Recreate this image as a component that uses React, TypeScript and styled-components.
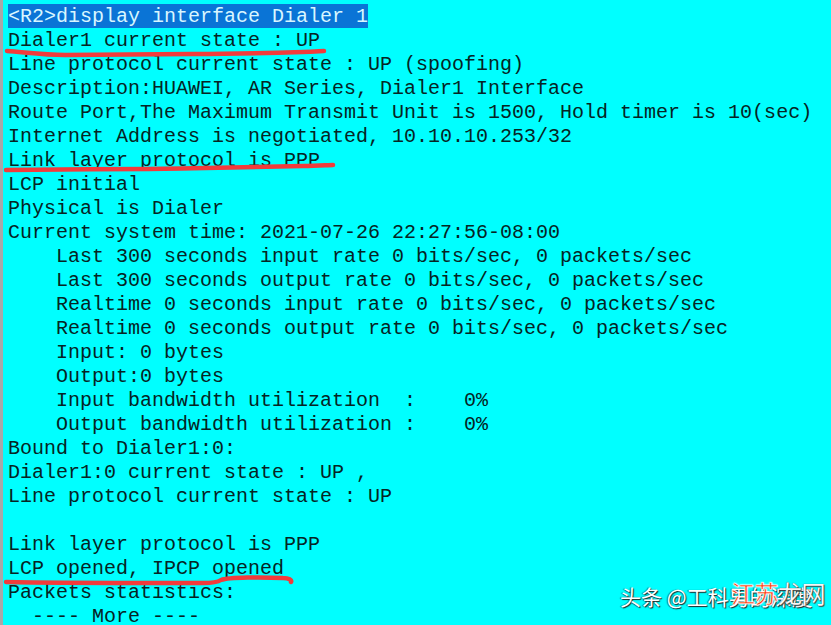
import React from "react";
import styled, { createGlobalStyle } from "styled-components";

const Global = createGlobalStyle`
  html, body { margin: 0; padding: 0; background: #00ffff; }
  body { width: 831px; height: 625px; overflow: hidden; }
`;

const Terminal = styled.div`
  position: relative;
  width: 831px;
  height: 625px;
  box-sizing: border-box;
  overflow: hidden;
  background: #00ffff;
  border-left: 3px solid #a8a8a8;
  padding: 4px 0 0 5px;
  font-family: "Liberation Mono", "Courier New", monospace;
  font-size: 20px;
  line-height: 24px;
  color: #062424;
`;

const Line = styled.div<{ $indent?: number }>`
  height: 24px;
  line-height: 26px;
  white-space: pre;
  padding-left: ${(p) => (p.$indent ?? 0) * 12}px;
`;

const Selected = styled.span`
  display: inline-block;
  height: 24px;
  background: #0a74d6;
  color: #d8f6ff;
`;

const Marks = styled.svg`
  position: absolute;
  left: 0;
  top: 0;
  pointer-events: none;
`;

const Watermark = styled.div`
  position: absolute;
  left: 617px;
  top: 583px;
  display: flex;
  align-items: center;
  font-family: "Noto Sans CJK SC", "Noto Sans", sans-serif;
  font-size: 21px;
  line-height: 26px;
  color: #ffffff;
  text-shadow: 1px 1px 1px #222, -1px 0 1px rgba(0, 0, 0, 0.5);
  white-space: pre;
`;

const Stamp = styled.div`
  position: absolute;
  left: 728px;
  top: 578px;
  font-family: "Noto Sans CJK SC", sans-serif;
  font-size: 24px;
  line-height: 30px;
  letter-spacing: -0.5px;
  white-space: pre;
`;

const StampRed = styled.span`
  color: #ff3a0a;
  -webkit-text-stroke: 0.5px #ffffff;
  text-shadow: 0 0 2px #fff, 0 0 2px #fff;
`;

const StampWhite = styled.span`
  color: #f6f6f6;
  text-shadow: 0 0 1px #333, 1px 1px 1px #444;
`;

const lines: { t: string; i?: number }[] = [
  { t: "Dialer1 current state : UP" },
  { t: "Line protocol current state : UP (spoofing)" },
  { t: "Description:HUAWEI, AR Series, Dialer1 Interface" },
  { t: "Route Port,The Maximum Transmit Unit is 1500, Hold timer is 10(sec)" },
  { t: "Internet Address is negotiated, 10.10.10.253/32" },
  { t: "Link layer protocol is PPP" },
  { t: "LCP initial" },
  { t: "Physical is Dialer" },
  { t: "Current system time: 2021-07-26 22:27:56-08:00" },
  { t: "Last 300 seconds input rate 0 bits/sec, 0 packets/sec", i: 4 },
  { t: "Last 300 seconds output rate 0 bits/sec, 0 packets/sec", i: 4 },
  { t: "Realtime 0 seconds input rate 0 bits/sec, 0 packets/sec", i: 4 },
  { t: "Realtime 0 seconds output rate 0 bits/sec, 0 packets/sec", i: 4 },
  { t: "Input: 0 bytes", i: 4 },
  { t: "Output:0 bytes", i: 4 },
  { t: "Input bandwidth utilization  :    0%", i: 4 },
  { t: "Output bandwidth utilization :    0%", i: 4 },
  { t: "Bound to Dialer1:0:" },
  { t: "Dialer1:0 current state : UP ," },
  { t: "Line protocol current state : UP" },
  { t: "" },
  { t: "Link layer protocol is PPP" },
  { t: "LCP opened, IPCP opened" },
  { t: "Packets statistics:" },
  { t: "---- More ----", i: 2 },
];

export default function App() {
  return (
    <>
      <Global />
      <Terminal>
        <Line>
          <Selected>{"<R2>display interface Dialer 1"}</Selected>
        </Line>
        {lines.map((l, k) => (
          <Line key={k} $indent={l.i}>
            {l.t}
          </Line>
        ))}
        <Marks width="831" height="625" viewBox="0 0 831 625">
          <g
            fill="none"
            stroke="#f23b3b"
            strokeWidth="4.5"
            strokeLinecap="round"
            strokeLinejoin="round"
          >
            <path d="M4 51 C 20 52, 40 55, 62 55 C 110 55, 150 54, 190 54 C 230 54, 270 53, 300 52 C 310 52, 318 51, 321 51" />
            <path d="M3 170 C 40 170, 100 169, 145 169 C 200 168, 260 167, 300 166 C 315 166, 325 165, 330 165" />
            <path d="M3 582 C 40 583, 120 583, 200 583 C 210 583, 215 582, 218 580 C 226 577, 260 577, 280 578 C 286 578, 289 580, 288 582" />
          </g>
        </Marks>
        <Watermark>{"头条 @工科男的深度"}</Watermark>
        <Stamp>
          <StampRed>江苏</StampRed>
          <StampWhite>龙网</StampWhite>
        </Stamp>
      </Terminal>
    </>
  );
}
